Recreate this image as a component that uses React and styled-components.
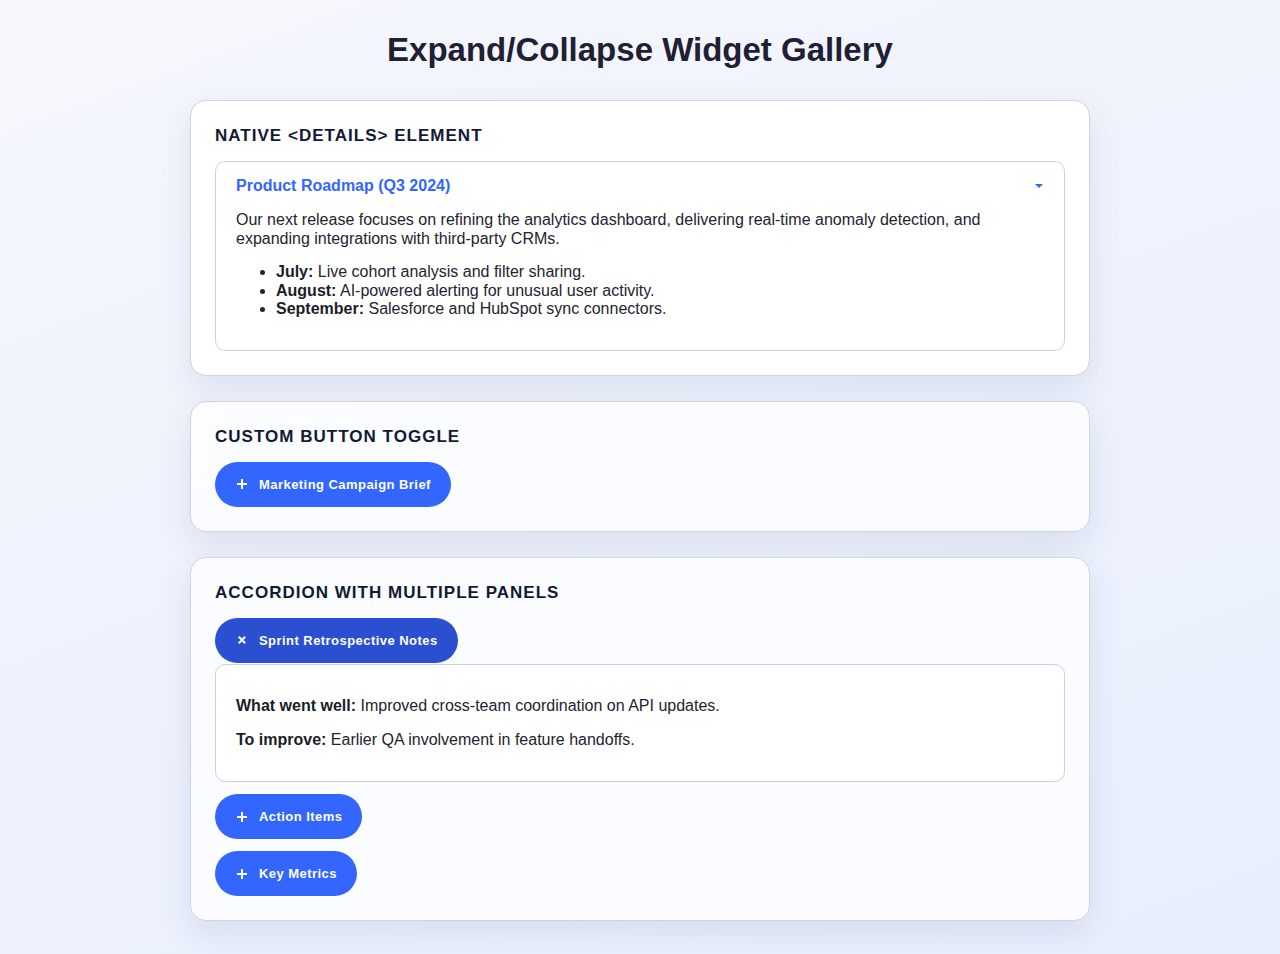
import React, { useState } from "react";
import styled, { createGlobalStyle } from "styled-components";

const GlobalStyle = createGlobalStyle`
  * { box-sizing: border-box; }
  html, body {
    margin: 0;
    padding: 0;
  }
  body {
    font-family: "Liberation Sans", Arial, Helvetica, sans-serif;
    color: #1f2130;
    background: linear-gradient(160deg, #f5f7fc 0%, #eef2fd 50%, #e8eefd 100%);
    min-height: 954px;
  }
`;

const Page = styled.div`
  padding: 31px 20px 40px;
`;

const Title = styled.h1`
  margin: 0 0 31px;
  text-align: center;
  font-size: 33px;
  line-height: 38px;
  font-weight: 700;
  color: #1f2033;
`;

const Stack = styled.div`
  width: 900px;
  margin: 0 auto;
  display: flex;
  flex-direction: column;
  gap: 25px;
`;

const Card = styled.section`
  background: ${({ $tint }) => ($tint ? "rgba(252, 253, 255, 0.92)" : "#ffffff")};
  border: 1px solid #d2d4dc;
  border-radius: 16px;
  padding: 23px 24px 24px;
  box-shadow: 0 12px 32px rgba(40, 55, 110, 0.1);
`;

const CardHeading = styled.h2`
  margin: 0 0 13px;
  font-size: 17px;
  line-height: 24px;
  font-weight: 700;
  letter-spacing: 0.06em;
  text-transform: uppercase;
  color: #111a33;
`;

const Details = styled.details`
  border: 1px solid #cfd1d8;
  border-radius: 10px;
  padding: 14px 20px 16px;
  background: #fff;
`;

const Summary = styled.summary`
  list-style: none;
  display: flex;
  align-items: center;
  justify-content: space-between;
  font-size: 16px;
  line-height: 20px;
  font-weight: 700;
  color: #3366ff;
  cursor: pointer;

  &::-webkit-details-marker { display: none; }

  &::after {
    content: "";
    width: 0;
    height: 0;
    margin-right: 1px;
    border-left: 4px solid transparent;
    border-right: 4px solid transparent;
    border-top: 4px solid #3366ff;
  }
`;

const Text = styled.p`
  margin: 15px 0;
  font-size: 16px;
  line-height: 18.5px;
  color: #222430;

  strong { font-weight: 700; color: #1b1d29; }
`;

const List = styled.ul`
  margin: 15px 0 15px;
  padding-left: 40px;
  font-size: 16px;
  line-height: 18.5px;
  color: #222430;

  strong { font-weight: 700; color: #1b1d29; }
`;

const ToggleButton = styled.button`
  display: inline-flex;
  align-items: center;
  gap: 12px;
  align-self: flex-start;
  height: 45px;
  padding: 0 20px 0 22px;
  border: none;
  border-radius: 999px;
  background: ${({ $open }) => ($open ? "#2a4fd0" : "#3366ff")};
  color: #fff;
  font-family: "Liberation Sans", Arial, Helvetica, sans-serif;
  font-size: 13px;
  letter-spacing: 0.45px;
  font-weight: 700;
  cursor: pointer;
`;

const Accordion = styled.div`
  display: flex;
  flex-direction: column;
  gap: 12px;
`;

const Item = styled.div`
  display: flex;
  flex-direction: column;
  gap: 1px;
`;

const Panel = styled.div`
  border: 1px solid #cfd1d8;
  border-radius: 10px;
  padding: 16px 20px;
  background: #fff;
`;

const PanelText = styled(Text)`
  margin: 15.5px 0;
  &:first-child { margin-top: 16px; }
  &:last-child { margin-bottom: 16px; }
`;

function ToggleIcon({ open }) {
  return (
    <svg width="10" height="10" viewBox="0 0 10 10" aria-hidden="true">
      {open ? (
        <path d="M1.8 1.8 8.2 8.2 M8.2 1.8 1.8 8.2" stroke="#fff" strokeWidth="2" strokeLinecap="butt" />
      ) : (
        <path d="M5 0v10 M0 5h10" stroke="#fff" strokeWidth="2" />
      )}
    </svg>
  );
}

const panels = [
  {
    id: "retro",
    title: "Sprint Retrospective Notes",
    body: [
      ["What went well:", "Improved cross-team coordination on API updates."],
      ["To improve:", "Earlier QA involvement in feature handoffs."],
    ],
  },
  {
    id: "actions",
    title: "Action Items",
    body: [
      ["Owner:", "Platform team to document API versioning policy."],
      ["Deadline:", "Next sprint planning session."],
    ],
  },
  {
    id: "metrics",
    title: "Key Metrics",
    body: [
      ["Velocity:", "42 story points completed."],
      ["Bugs closed:", "18 issues resolved this sprint."],
    ],
  },
];

export default function App() {
  const [briefOpen, setBriefOpen] = useState(false);
  const [openPanel, setOpenPanel] = useState("retro");

  return (
    <>
      <GlobalStyle />
      <Page>
        <Title>Expand/Collapse Widget Gallery</Title>
        <Stack>
          <Card>
            <CardHeading>Native &lt;details&gt; Element</CardHeading>
            <Details open>
              <Summary>Product Roadmap (Q3 2024)</Summary>
              <Text>
                Our next release focuses on refining the analytics dashboard, delivering real-time anomaly
                detection, and expanding integrations with third-party CRMs.
              </Text>
              <List>
                <li><strong>July:</strong> Live cohort analysis and filter sharing.</li>
                <li><strong>August:</strong> AI-powered alerting for unusual user activity.</li>
                <li><strong>September:</strong> Salesforce and HubSpot sync connectors.</li>
              </List>
            </Details>
          </Card>

          <Card $tint>
            <CardHeading>Custom Button Toggle</CardHeading>
            <Accordion>
              <ToggleButton $open={briefOpen} onClick={() => setBriefOpen(!briefOpen)}>
                <ToggleIcon open={briefOpen} />
                Marketing Campaign Brief
              </ToggleButton>
              {briefOpen && (
                <Panel>
                  <PanelText>Launch goals, audience segments and channel mix for the Q3 campaign.</PanelText>
                </Panel>
              )}
            </Accordion>
          </Card>

          <Card $tint>
            <CardHeading>Accordion With Multiple Panels</CardHeading>
            <Accordion>
              {panels.map((p) => {
                const open = openPanel === p.id;
                return (
                  <Item key={p.id}>
                    <ToggleButton $open={open} onClick={() => setOpenPanel(open ? null : p.id)}>
                      <ToggleIcon open={open} />
                      {p.title}
                    </ToggleButton>
                    {open && (
                      <Panel>
                        {p.body.map(([label, text]) => (
                          <PanelText key={label}>
                            <strong>{label}</strong> {text}
                          </PanelText>
                        ))}
                      </Panel>
                    )}
                  </Item>
                );
              })}
            </Accordion>
          </Card>
        </Stack>
      </Page>
    </>
  );
}
